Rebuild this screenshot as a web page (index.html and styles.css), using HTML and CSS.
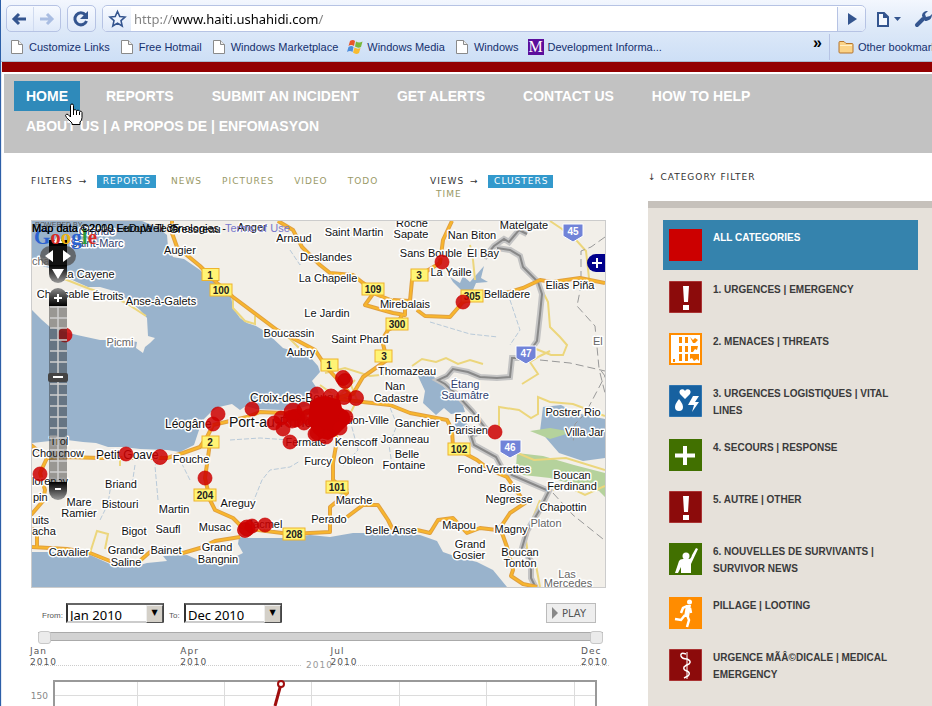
FILE: index.html
```html
<!DOCTYPE html>
<html lang="en">
<head>
<meta charset="utf-8">
<title>Ushahidi Haiti</title>
<link rel="stylesheet" href="styles.css">
</head>
<body>
<header class="browser">
  <div class="toolbar">
    <div class="history">
      <button type="button" aria-label="Back"><svg width="26" height="24" viewBox="0 0 26 24"><path d="M19 12H8M12 7l-5 5 5 5" fill="none" stroke="#34558f" stroke-width="3"/></svg></button>
      <button type="button" aria-label="Forward"><svg width="26" height="24" viewBox="0 0 26 24"><path d="M6 12h11M13 7l5 5-5 5" fill="none" stroke="#a9bde2" stroke-width="3"/></svg></button>
    </div>
    <button type="button" class="reload" aria-label="Reload"><svg width="26" height="24" viewBox="0 0 26 24"><path d="M17.500 8a6 6 0 1 0 1 6" fill="none" stroke="#34558f" stroke-width="3"/><path d="M20 4v8h-8z" fill="#34558f"/></svg></button>
    <form class="address">
      <button type="button" aria-label="Bookmark this page"><svg width="28" height="24" viewBox="0 0 28 24"><path d="M14.500 4.500l2.300 5 5.200.5-4 3.600 1.200 5.400-4.700-2.900L9.800 19l1.200-5.400-4-3.600 5.200-.5z" fill="#eef4ff" stroke="#34558f" stroke-width="1.600"/></svg></button>
      <input type="text" aria-label="Address" value="http://www.haiti.ushahidi.com/">
      <button type="submit" class="go" aria-label="Go"><svg width="28" height="24" viewBox="0 0 28 24"><path d="M10 6l9 6-9 6z" fill="#34558f"/></svg></button>
    </form>
    <button type="button" class="plain" aria-label="Page menu"><svg width="26" height="24" viewBox="0 0 26 24"><path d="M2 6h6l4 4v9H2zM8 6v4h4" fill="#f4f8ff" stroke="#34558f" stroke-width="2"/><path d="M18 10h7l-3.500 4z" fill="#34558f"/></svg></button>
    <button type="button" class="plain" aria-label="Settings"><svg width="18" height="24" viewBox="0 0 18 24"><path d="M3 18l6-6" stroke="#34558f" stroke-width="4" stroke-linecap="round"/><path d="M8 9c0-3 2-5 6-5l-3 3 1 3 4-1 2-2c0 5-3 7-7 7z" fill="#34558f"/></svg></button>
  </div>
  <nav class="bookmarks" aria-label="Bookmarks">
    <a href="#"><svg class="fav" viewBox="0 0 16 16"><use href="#doc"/></svg>Customize Links</a>
    <a href="#"><svg class="fav" viewBox="0 0 16 16"><use href="#doc"/></svg>Free Hotmail</a>
    <a href="#"><svg class="fav" viewBox="0 0 16 16"><use href="#doc"/></svg>Windows Marketplace</a>
    <a href="#"><svg class="fav" viewBox="0 0 16 16"><path d="M3 2q3-2 5 0L7 7Q4 5 1.500 7z" fill="#e8562a"/><path d="M9 2.500q3 2 6.500 0L14 8q-3 1.500-6-.5z" fill="#7ab83c"/><path d="M1.500 8q3-2 5 0L5.500 13Q3 11 0 13z" fill="#4d8ddb"/><path d="M7.500 8.500q3 2 6 .5L12 14q-3 2-6-.5z" fill="#f8bc30"/></svg>Windows Media</a>
    <a href="#"><svg class="fav" viewBox="0 0 16 16"><use href="#doc"/></svg>Windows</a>
    <a href="#"><span class="m-logo" aria-hidden="true">M</span>Development Informa...</a>
    <button type="button" class="more" aria-label="More bookmarks">»</button>
    <a href="#" class="other"><svg class="fav" viewBox="0 0 16 16"><path d="M1 3.500q0-1 1-1h4l2 2h6q1 0 1 1V13q0 1-1 1H2q-1 0-1-1z" fill="#fbd387" stroke="#b4752e"/><path d="M2 6.500h12" stroke="#fff0c8"/></svg>Other bookmarks</a>
  </nav>
  <svg class="defs" aria-hidden="true"><defs>
    <g id="doc"><path d="M2.500 1.500h7l4 4v9h-11z" fill="#fff" stroke="#8a8a8a"/><path d="M9.500 1.500v4h4" fill="#eee" stroke="#8a8a8a"/></g>
    <g id="bang"><path d="M.5.500h32v31H.5z" fill="#8c0b0b" stroke="#a33"/><path d="M14 5h6l-1 16h-4zM14 24h6v5h-6z" fill="#fff"/></g>
  </defs></svg>
</header>

<div class="site">
  <div class="redbar"></div>
  <nav class="mainnav">
    <a href="#" class="active">HOME</a>
    <a href="#">REPORTS</a>
    <a href="#">SUBMIT AN INCIDENT</a>
    <a href="#">GET ALERTS</a>
    <a href="#">CONTACT US</a>
    <a href="#">HOW TO HELP</a>
    <a href="#">ABOUT US | A PROPOS DE | ENFOMASYON</a>
    <svg class="cursor" width="20" height="24" viewBox="0 0 20 24" aria-hidden="true"><path d="M6.500 14V2.500q0-1.500 1.500-1.500t1.500 1.500V7q2-1 3 .5q2-1 3 .7q2-.6 2.500 1.300v5q0 3-2 4.500v2.500h-8V20L2.500 14.500q-2-2.500 0-3.300q1.500-.4 3 1.800z" fill="#fff" stroke="#000"/><path d="M9.500 7v5M12.500 8v4M15.500 9v3" stroke="#000"/></svg>
  </nav>

  <div class="content">
    <main>
      <div class="filters">
        <div class="group"><span>FILTERS</span><span class="arrow">→</span><a href="#" class="on">REPORTS</a><a href="#">NEWS</a><a href="#">PICTURES</a><a href="#">VIDEO</a><a href="#">TODO</a></div>
        <div class="group views"><span>VIEWS</span><span class="arrow">→</span><a href="#" class="on">CLUSTERS</a><a href="#">TIME</a></div>
      </div>

      <svg class="map" viewBox="32 221 573 366" role="img" aria-label="Map of incident reports around Port-au-Prince">
        <rect x="32" y="221" width="573" height="366" fill="#f2efe9"/>
        <g fill="#99b3cc">
          <path d="M32 221H142L157 227 167 235 168 247 173 257 184 259 200 270 207 277 230 290 233 308 240 318 247 323 256 326 266 332 283 348 296 352 310 357 318 366 320 372 312 381 318 390 320 402 304 407 283 410 256 409 246 406 240 410 232 404 219 407 211 412 202 421 198 433 194 445 180 452 167 450 140 449 123 447 108 447 96 443 83 442 67 440 50 441 32 443z"/>
          <path d="M32 552L67 552 90 555 110 564 133 567 147 563 167 561 163 556 187 555 205 563 233 558 243 553 238 544 239 537 247 538 283 538 310 535 330 537 353 533 390 533 420 535 437 541 443 552 457 557 477 562 493 570 507 587H32z"/>
          <path d="M418 376l14-2 6 8 14 12 10 8 3 10-14 2-7-6-8 7-13-12 2-12z"/>
          <path d="M458 415l20 20-16 0-8-8z"/>
          <path d="M543 407l18-2 15 8 29 6v39l-22 3-24-8-19-22z"/>
          <path d="M450 277l10 6 3-7 7 6 14-16-3 12 7 4-12 1-3 7h-12l-8-8z"/>
        </g>
        <path d="M32 264L50 268 70 279 88 287 100 287 114 291 127 299 140 310 147 318 148 336 155 338 150 343 145 347 143 353 136 348 137 342 127 340 100 340 77 335 62 331 50 327 42 320 32 310z" fill="#f2efe9"/>
        <g fill="#b5d29c"><path d="M530 431l20-3 23 4-23 7z"/><path d="M517 453l26 3 31 9 31 8v24l-6-6-49-13-27-3-7-8z"/><path d="M337 485l12 4-7 6-8-4z"/></g>
        <path d="M230 440l30-2 45 3M100 520l8-16 3-20M250 510l12-30 8-10 20-3 10-6M158 500l-3-34 8-13M135 465l-3 20M190 480l-10-20M385 395l12 30-8 20 3 20M350 420l8 30-15 16M510 300l10 30-10 15M430 322l40 12 28 3M290 250l10 15 8-14" class="stream"/>
        <g class="minor">
          <path d="M62 278l15 6 13 5 16 5 20 9 20 13M233 297l0 11 12 13 10 3v-8M277 330l12 8 10 10M412 366l10-7 14 3 10-4 12 6 12-4 13 4M550 221l12 8 15 12 9 10 3 27M538 282l10 20 2 25 10 10 7 8-4 10-12 0-15-6M550 351l-10 5-10 6 8 12-16 10M499 427v-20l20 3 12 8 7-4v-17l12 5 23 2 32 12M500 440l10 10 24 10 32-2 39 12M553 490l12-5 20 10 20-9M540 500l-10 25-4 15 2 15 8 10 4 22M90 553l7-22 11 3-3 15M120 466l0-6M470 245l3 15 2 20M325 373l20-5 25 8 20-2M320 385l14 10 4 20M345 370l12 30-10 20M355 380l-25 25"/>
        </g>
        <g class="dash"><path d="M605 237l-14 10-10 4v35l-4 20 18 20 4 42 6 8-20 38-10 10-2 20M540 360l30 3 35 8M553 493l20 22 30 24M600 373l5 20"/></g>
        <path d="M484 258l10-12 10-7 5 3 10-12 8 4M497 248l13 2 10 6 3 11 15 15 4 12-2 20-3 27-12 17-13 0-2 19-13 1-17-1-12-5-15-3-6 7-9 4 7 4 12 11 15 16 14 18-15 7 3 9 22 12 6 11 10 7 37 16-10 20-12 20-5 17 9 13v17l5 10" class="border"/>
        <path d="M484 258l10-12 10-7 5 3 10-12 8 4M497 248l13 2 10 6 3 11 15 15 4 12-2 20-3 27-12 17-13 0-2 19-13 1-17-1-12-5-15-3-6 7-9 4 7 4 12 11 15 16 14 18-15 7 3 9 22 12 6 11 10 7 37 16-10 20-12 20-5 17 9 13v17l5 10" class="border-core"/>
        <defs><g id="roads">
          <path d="M172 221v12l5 14 23 19 17 17 16 14 44 33 23 12 15 8 12 18 13 14 10 12-24 8"/>
          <path d="M278 221l15 9 9 17 18 18 10 8 23 2 10 8 12 8-10 14 28 8 12 2v-10l-12-4-20-8M393 300l17 1 2-21 28-17 3-23 9-19"/>
          <path d="M417 310l8 6 25 1 13-15 20-6 27-4 13-4 17-8 12 2 28-4 25 5"/>
          <path d="M402 315l-5 10-9 5-6 10 5 20-24 17-10 17-20 5"/>
          <path d="M325 412l-42 1-23-1-13 5-34 8-6 12-7 10-17 6-16 5h-67l-33-1-20 1-16-13"/>
          <path d="M47 458l-7 15 5 17-2 11-12 14M32 528l5 8v12M32 547l35 2 23 4 20 8 25 4 15-13 33 1 17-5 15-7 25-4"/>
          <path d="M210 437l-1 13-4 28 5 22 5 10 18 8 10 10M243 528l47 6 40-2v-25l17-14-14-13v-17l4-23-4-12"/>
          <path d="M347 517l16-12h15l10 15 4 8 25 2 13 3 8-13 15-2 14 15 13-5 17 2 5-5 8-12 15-10-18-26-17-7-13-10-24-13-1-17-5-10-37-7-20-8-27-3-33-4"/>
          <path d="M502 533l5 14 6 23-2 6 12 8 14 3"/>
        </g></defs>
        <use href="#roads" class="road-edge"/>
        <use href="#roads" class="road"/>
        <g class="labels">
          <text x="97" y="235" class="lake">Grande</text><text x="97" y="247" class="lake">Saint-Marc</text>
          <text x="32" y="265" class="soft start">chal</text>
          <text x="195" y="233">Gressreau</text><text x="252" y="231">Anger</text><text x="180" y="254">Augier</text>
          <text x="294" y="242">Arnaud</text><text x="88" y="278">La Cayene</text><text x="63" y="298">Chansable</text><text x="108" y="300">Étroits</text>
          <text x="161" y="305">Anse-à-Galets</text><text x="120" y="346" class="soft">Picmi</text>
          <text x="289" y="337">Boucassin</text><text x="301" y="356">Aubry</text>
          <text x="354" y="236">Saint Martin</text><text x="412" y="227">Roche</text><text x="411" y="238">Sapate</text><text x="472" y="239">Nan Biton</text><text x="524" y="229">Matelgate</text>
          <text x="326" y="261">Deslandes</text><text x="328" y="282">La Chapelle</text><text x="431" y="257">Sans Bouble</text><text x="483" y="257">El Bay</text><text x="451" y="276">La Yaille</text>
          <text x="507" y="298">Belladere</text><text x="570" y="289">Elias Piña</text><text x="405" y="308">Mirebalais</text><text x="327" y="317">Le Jardin</text>
          <text x="360" y="343">Saint Phard</text><text x="407" y="375">Thomazeau</text><text x="593" y="345" class="soft start">El</text>
          <text x="395" y="390">Nan</text><text x="396" y="402">Cadastre</text><text x="465" y="388" class="lake">Étang</text><text x="465" y="399" class="lake">Saumâtre</text>
          <text x="250" y="402" class="mid start">Croix-des-Bouq</text><text x="165" y="428" class="mid start">Léogâne</text><text x="229" y="427" class="big start">Port-au-Prince</text>
          <text x="389" y="424" class="end">Petion-Ville</text><text x="417" y="427">Ganchier</text><text x="467" y="422">Fond</text><text x="468" y="434">Parisien</text>
          <text x="573" y="416">Postrer Rio</text><text x="604" y="436" class="end">Villa Jar</text><text x="405" y="443">Joanneau</text><text x="407" y="458">Belle</text><text x="404" y="469">Fontaine</text>
          <text x="306" y="446">Fermate</text><text x="356" y="446">Kenscoff</text><text x="318" y="465">Furcy</text><text x="356" y="464">Obleon</text>
          <text x="494" y="473">Fond-Verrettes</text><text x="572" y="479">Boucan</text><text x="572" y="490">Ferdinand</text><text x="510" y="492">Bois</text><text x="509" y="503">Negresse</text><text x="563" y="511">Chapottin</text><text x="546" y="527" class="soft">Platon</text>
          <text x="354" y="504">Marche</text><text x="329" y="523">Perado</text><text x="391" y="534">Belle Anse</text><text x="459" y="529">Mapou</text><text x="511" y="533">Magny</text><text x="470" y="548">Grand</text><text x="469" y="559">Gosier</text><text x="520" y="556">Boucan</text><text x="520" y="567">Tonton</text><text x="567" y="578" class="soft">Las</text><text x="568" y="587" class="soft">Mercedes</text>
          <text x="59" y="445">Trol</text><text x="58" y="457">Chouchow</text><text x="96" y="459" class="mid start">Petit Goave</text><text x="191" y="463">Fouche</text><text x="32" y="485" class="start">lorenoy</text><text x="33" y="501" class="start">pin</text><text x="32" y="524" class="start">uits</text><text x="32" y="535" class="start">acha</text>
          <text x="121" y="488">Briand</text><text x="120" y="508">Bistouri</text><text x="79" y="506">Mare</text><text x="79" y="517">Ramier</text><text x="174" y="513">Martin</text><text x="168" y="533">Saufl</text><text x="134" y="535">Bigot</text><text x="215" y="531">Musac</text><text x="238" y="507">Areguy</text><text x="265" y="528">Jacmel</text>
          <text x="69" y="556">Cavalier</text><text x="126" y="554">Grande</text><text x="126" y="566">Saline</text><text x="166" y="554">Bainet</text><text x="217" y="551">Grand</text><text x="218" y="563">Bangnin</text>
        </g>
        <g class="shield">
          <rect x="202" y="268.500" width="17" height="12"/><text x="210" y="279">1</text>
          <rect x="210" y="284" width="22" height="12"/><text x="221" y="294">100</text>
          <rect x="362" y="283" width="22" height="12"/><text x="373" y="293">109</text>
          <rect x="411" y="269" width="17" height="12"/><text x="419" y="279">3</text>
          <rect x="461" y="290" width="22" height="12"/><text x="472" y="300">305</text>
          <rect x="386" y="318" width="22" height="12"/><text x="397" y="328">300</text>
          <rect x="375" y="350" width="17" height="12"/><text x="384" y="360">3</text>
          <rect x="321" y="359" width="17" height="12"/><text x="329" y="369">1</text>
          <rect x="202" y="436" width="17" height="12"/><text x="210" y="446">2</text>
          <rect x="194" y="489" width="22" height="12"/><text x="205" y="499">204</text>
          <rect x="283" y="528" width="22" height="12"/><text x="294" y="538">208</text>
          <rect x="326" y="481" width="22" height="12"/><text x="337" y="491">101</text>
          <rect x="448" y="443" width="22" height="12"/><text x="459" y="453">102</text>
        </g>
        <g class="intl">
          <path d="M563 224h20v12l-10 6-10-6z"/><text x="573" y="235">45</text>
          <path d="M516 346h20v12l-10 6-10-6z"/><text x="526" y="357">47</text>
          <path d="M500 440h21v12l-11 6-10-6z"/><text x="510" y="451">46</text>
        </g>
        <g class="dots">
          <circle cx="442" cy="262" r="7"/><circle cx="463" cy="302" r="7"/><circle cx="495" cy="432" r="7"/><circle cx="65" cy="335" r="7"/>
          <circle cx="252" cy="409" r="7"/><circle cx="218" cy="414" r="7"/><circle cx="213" cy="424" r="7"/><circle cx="126" cy="454" r="7"/><circle cx="160" cy="457" r="7.500"/><circle cx="40" cy="474" r="7"/><circle cx="205" cy="478" r="7"/>
          <circle cx="245" cy="530" r="7.500"/><circle cx="247" cy="528" r="8"/><circle cx="252" cy="526" r="7"/><circle cx="265" cy="525" r="7"/>
          <circle cx="343" cy="378" r="7.500"/><circle cx="345" cy="381" r="7.500"/><circle cx="356" cy="398" r="7.500"/><circle cx="344" cy="397" r="7.500"/><circle cx="331" cy="397" r="8"/><circle cx="317" cy="394" r="7"/>
          <circle cx="290" cy="442" r="7"/><circle cx="274" cy="423" r="7"/><circle cx="283" cy="429" r="7"/><circle cx="281" cy="418" r="7"/><circle cx="293" cy="412" r="9"/><circle cx="296" cy="418" r="9"/><circle cx="292" cy="419" r="9"/><circle cx="304" cy="409" r="7"/><circle cx="304" cy="423" r="7"/><circle cx="309" cy="417" r="8"/><circle cx="315" cy="434" r="7"/>
        </g>
        <path d="M310 402q6-6 16-6l14 4 2 8 6 4q4 6 1 11l-7 7-6 6-8 4-8-2-6-5-6-10z" fill="#c00"/>
        <g class="dots"><circle cx="346" cy="417" r="7"/><circle cx="340" cy="428" r="7"/><circle cx="326" cy="437" r="7"/><circle cx="317" cy="433" r="7"/></g>
        <path d="M605 254h-9a9 9 0 0 0 0 18h9z" fill="#00008b"/><path d="M592 263h10M597 258v10" stroke="#fff" stroke-width="2"/>
        <defs><linearGradient id="cap" x2="0" y2="1"><stop offset="0" stop-color="#888"/><stop offset="1"/></linearGradient><linearGradient id="cap2" x2="0" y2="1"><stop offset="0"/><stop offset="1" stop-color="#999"/></linearGradient></defs>
        <rect x="49" y="240" width="18" height="33" fill="#000"/><rect x="40" y="246" width="36" height="20" rx="10" fill="#555" opacity=".8"/><rect x="49" y="246" width="18" height="20" fill="#111"/><path d="M49 265h18v9a9 9 0 0 1-18 0z" fill="url(#cap2)"/>
        <path d="M45 256l8-6v12zM71 256l-8-6v12zM58 279l-6-10h12zM58 235l5 8h-10z" fill="#fff"/>
        <text x="35" y="227" class="powered">POWERED BY</text>
        <text x="34" y="244" class="google"><tspan fill="#2b62d0">G</tspan><tspan fill="#d62b24">o</tspan><tspan fill="#eeb211">o</tspan><tspan fill="#2b62d0">g</tspan><tspan fill="#2b9b3c">l</tspan><tspan fill="#d62b24">e</tspan></text>
        <text x="32" y="232" class="credit">Map data ©2010 Europa Technologies -</text>
        <text x="32" y="232" class="credit">Map data ©2009 LeDuWell 35</text>
        <text x="225" y="232" class="credit terms">Terms of Use</text>
        <path d="M49 306v-9a9 9 0 0 1 18 0v9z" fill="url(#cap)"/><path d="M54 298h8M58 294v8" stroke="#fff" stroke-width="2"/>
        <rect x="49" y="306" width="18" height="177" fill="#222" opacity=".43"/>
        <path d="M58 306v176M50 307h17M50 318h17M50 328h17M50 340h17M50 351h17M50 362h17M50 384h17M50 395h17M50 406h17M50 417h17M50 428h17M50 438h17M50 450h17M50 461h17M50 472h17" stroke="#d0d0d0" stroke-width="1.500" fill="none"/>
        <path d="M49 482h18v9a9 9 0 0 1-18 0z" fill="url(#cap2)"/><path d="M55 489h6" stroke="#fff" stroke-width="2"/>
        <rect x="48" y="373" width="20" height="9" rx="2" fill="#444"/><path d="M53 377h10" stroke="#fff" stroke-width="2"/>
      </svg>

      <form class="range">
        <label for="from">From:</label>
        <span class="picker"><select id="from"><option>Jan 2010</option></select></span>
        <label for="to">To:</label>
        <span class="picker"><select id="to"><option>Dec 2010</option></select></span>
        <button type="button" class="play"><svg width="6" height="12" viewBox="0 0 6 12"><path d="M0 0l6 6-6 6z" fill="#888"/></svg>PLAY</button>
      </form>
      <div class="slider">
        <input type="range" aria-label="Start month" min="0" max="11" value="0">
        <input type="range" aria-label="End month" min="0" max="11" value="11">
      </div>
      <div class="scale">
        <div class="year"><span>2010</span></div>
        <div class="months"><span>Jan<br>2010</span><span>Apr<br>2010</span><span>Jul<br>2010</span><span>Dec<br>2010</span></div>
      </div>
      <svg class="chart" viewBox="31 680 575 26" role="img" aria-label="Reports per month">
        <path d="M137.500 682v24M224.500 682v24M311.500 682v24M399.500 682v24M486.500 682v24M574.500 682v24M55 695.500h541" stroke="#dcdcdc" fill="none"/>
        <path d="M54 706V681h542v25" stroke="#999" stroke-width="2" fill="none"/>
        <path d="M281 684l-6 22" stroke="#a00d0d" stroke-width="3" fill="none"/>
        <circle cx="281" cy="684" r="3" fill="#fff" stroke="#a00d0d" stroke-width="2"/>
        <text x="48" y="699" class="tick">150</text>
      </svg>
    </main>

    <aside>
      <h2>↓ CATEGORY FILTER</h2>
      <ul class="categories">
        <li><a href="#" class="on"><svg viewBox="0 0 33 32"><path d="M0 0h33v32H0z" fill="#c00"/></svg><span>ALL CATEGORIES</span></a></li>
        <li><a href="#"><svg viewBox="0 0 33 32"><use href="#bang"/></svg><span>1. URGENCES | EMERGENCY</span></a></li>
        <li><a href="#"><svg viewBox="0 0 33 32"><path d="M1 1h31v30H1z" fill="#fff" stroke="#ff8c00" stroke-width="2"/><path d="M10 4h3v6h-3zM16 4h3v6h-3zM21 4l3 3 2-2 3 2-3 3h-2zM10 13h3v6h-3zM16 13h3v6h-3zM22 13h7l-1 4-2-1-2 3h-2zM10 21h3v7h-3zM16 21h3v7h-3zM21 21h9v7l-2-2-3 2-2-3-2 1zM4 26h2v3H4z" fill="#ff8c00"/></svg><span>2. MENACES | THREATS</span></a></li>
        <li><a href="#"><svg viewBox="0 0 33 32"><path d="M.5.500h32v31H.5z" fill="#1761a0" stroke="#2f75b0"/><path d="M16 14l-5-5q-1.500-3 1-4.500 3-1 4 1.500 1-2.500 4-1.500 2.500 1.500 1 4.500zM10 14q4 5 4 8a4 4 0 0 1-8 0q0-3 4-8zM24 11h6l-4 6h4l-7 10 2-7h-6z" fill="#fff"/></svg><span>3. URGENCES LOGISTIQUES | VITAL LINES</span></a></li>
        <li><a href="#"><svg viewBox="0 0 33 32"><path d="M0 0h33v32H0z" fill="#417000"/><path d="M6 16.500h20M16 7v19" stroke="#fff" stroke-width="4"/></svg><span>4. SECOURS | RESPONSE</span></a></li>
        <li><a href="#"><svg viewBox="0 0 33 32"><use href="#bang"/></svg><span>5. AUTRE | OTHER</span></a></li>
        <li><a href="#"><svg viewBox="0 0 33 32"><path d="M0 0h33v32H0z" fill="#417000"/><circle cx="17" cy="13" r="3.500" fill="#fff"/><path d="M27 5l2 1-7 15v9H12v-6l-3 6H6l4-12q1-2 4-2h6q2 0 3-4z" fill="#fff"/></svg><span>6. NOUVELLES DE SURVIVANTS | SURVIVOR NEWS</span></a></li>
        <li><a href="#"><svg viewBox="0 0 33 32"><path d="M0 0h33v32H0z" fill="#ff8c00"/><circle cx="20.500" cy="5" r="2.500" fill="#fff"/><path d="M18 9l-4 2-2 5M18 18l2 5-2 7M16 18l-4 5-6-1M21 11l1 5" fill="none" stroke="#fff" stroke-width="2.500"/><path d="M17 8h5l-2 12h-5z" fill="#fff"/></svg><span>PILLAGE | LOOTING</span></a></li>
        <li><a href="#"><svg viewBox="0 0 33 32"><path d="M.5.500h32v31H.5z" fill="#8c0b0b" stroke="#a33"/><path d="M18 3v27" stroke="#fff"/><path d="M17 5q-6-2-5 2 1 3 6 3 5 2 2 5-3 1-5 3-1 3 3 4 4 2 1 5l-4 2" fill="none" stroke="#fff" stroke-width="1.500"/></svg><span>URGENCE MÃÂ©DICALE | MEDICAL EMERGENCY</span></a></li>
      </ul>
    </aside>
  </div>
</div>
</body>
</html>
```
FILE: styles.css
```css
* { box-sizing: border-box; }
html { height: 100%; overflow: hidden; }
body {
  display: flex;
  flex-direction: column;
  margin: 0;
  height: 100%;
  overflow: hidden;
  background: #fff;
  border-left: 1px solid #2c5fa8;
  font-family: "Liberation Sans", Arial, sans-serif;
}
a { text-decoration: none; color: inherit; }
button { margin: 0; padding: 0; border: 0; background: none; color: inherit; font: inherit; }
svg { display: block; }
.defs { position: absolute; width: 0; height: 0; }

/* Browser toolbar */
.browser {
  flex: none;
  height: 62px;
  overflow: hidden;
  padding: 5px 0 0 5px;
  background: linear-gradient(#f3f7fe, #dce8f8 50%, #cddff6);
  border-bottom: 1px solid #a9b9cc;
}
.toolbar { display: flex; align-items: center; height: 27px; }
.history, .reload, .address {
  display: flex;
  align-items: center;
  height: 27px;
  border: 1px solid #b6c3e4;
  border-radius: 5px;
  background: linear-gradient(#f7faff, #dfe9f9);
}
.history { width: 55px; }
.history button + button { border-left: 1px solid #d0dbf0; }
.reload { width: 29px; margin: 0 6px; }
.address { flex: 1; overflow: hidden; background: #fff; }
.address input {
  flex: 1;
  min-width: 0;
  height: 25px;
  padding: 0 3px;
  border: 0;
  font: 13px "Noto Sans", Tahoma, sans-serif;
  background: linear-gradient(90deg, #808080 41px, #000 41px, #000 188px, #808080 188px);
  background-clip: text;
  color: transparent;
}
.address button { flex: none; width: 28px; background: linear-gradient(#f7faff, #dfe9f9); }
.address .go { border-left: 1px solid #b6c3e4; }
.plain { flex: none; margin-left: 10px; }
.plain + .plain { margin-left: 12px; }
.bookmarks {
  display: flex;
  align-items: center;
  height: 29px;
  padding-left: 3px;
  font-size: 11px;
  color: #15306e;
  white-space: nowrap;
}
.bookmarks a { display: flex; align-items: center; gap: 4px; margin-right: 9px; }
.fav { flex: none; width: 16px; height: 16px; }
.m-logo { width: 16px; height: 16px; background: #5c0f9c; color: #fff; font: 16px/16px "Liberation Serif", serif; text-align: center; }
.more { margin-left: auto; padding-bottom: 8px; font-weight: bold; font-size: 16px; color: #000; }
.bookmarks .other { width: 103px; height: 26px; margin: 0 0 0 7px; padding-left: 8px; border-left: 1px solid #b6c3e4; overflow: hidden; flex: none; }

/* Site header */
.site { flex: 1; min-height: 0; overflow: hidden; border-left: 1px solid #e3eaf5; }
.redbar { height: 10px; background: #930000; }
.mainnav {
  position: relative;
  display: flex;
  flex-wrap: wrap;
  align-content: flex-start;
  gap: 0 14px;
  margin: 2px 0 0 2px;
  padding: 7px 120px 12px 10px;
  background: #c2c2c2;
  color: #fff;
  font-size: 14px;
  font-weight: bold;
  line-height: 30px;
}
.mainnav a { padding: 0 12px; }
.mainnav .active { background: #2f8aba; }
.cursor { position: absolute; left: 60px; top: 29px; }

/* Two columns */
.content {
  display: grid;
  grid-template-columns: minmax(0, 575fr) minmax(0, 284fr);
  gap: 42px;
  padding-left: 29px;
}
.filters {
  display: grid;
  grid-template-columns: 399fr 176fr;
  margin: 22px 0 19px;
  font: 9px/13px "DejaVu Sans", Verdana, sans-serif;
  letter-spacing: 1px;
  color: #333;
}
.group { display: flex; flex-wrap: wrap; align-content: flex-start; column-gap: 9px; }
.views { padding-right: 40px; }
.group a { padding: 0 5px 0 6px; color: #999966; }
.group .on { background: #3399cc; color: #fff; }
.arrow { width: 9px; margin-left: -3px; }

.map { width: 100%; height: auto; border: 1px solid #ccc; }
.stream { fill: none; stroke: #b9cad9; stroke-width: 1; stroke-dasharray: 5 2; }
.minor { fill: none; stroke: #ecd67c; stroke-width: 2; }
.dash { fill: none; stroke: #999; stroke-width: 1; stroke-dasharray: 8 4; }
.border { fill: none; stroke: #c4c4c4; stroke-width: 6; }
.border-core { fill: none; stroke: #888; stroke-width: 2; }
.road-edge { fill: none; stroke: #e0a040; stroke-width: 4; stroke-linejoin: round; }
.road { fill: none; stroke: #f8b62d; stroke-width: 2; stroke-linejoin: round; }
.labels { font-size: 11px; text-anchor: middle; fill: #111; stroke: #fff; stroke-width: 3px; stroke-linejoin: round; paint-order: stroke; }
.labels .mid { font-size: 12px; }
.labels .big { font-size: 14px; }
.labels .soft { fill: #666; }
.labels .lake { fill: #2f3f70; }
.labels .start { text-anchor: start; }
.labels .end { text-anchor: end; }
.shield rect { fill: #fff475; stroke: #eeb42c; }
.shield text, .intl text { font-size: 10px; font-weight: bold; text-anchor: middle; fill: #222; }
.intl path { fill: #7183d8; stroke: #fff; }
.intl text { fill: #fff; }
.dots { fill: #c00; fill-opacity: .85; stroke: #c00; stroke-opacity: .7; }
.powered { font-size: 7px; fill: #555; }
.google { font: bold 21px "Liberation Serif", serif; }
.credit { font-size: 11px; fill: #000; }
.terms { fill: #7777cc; }

/* Time controls */
.range { display: flex; align-items: center; height: 20px; margin: 15px 10px 8px 11px; }
.range label { padding-top: 6px; font: 8px/12px "Liberation Sans", sans-serif; color: #555; width: 24px; }
.picker + label { width: 15px; margin-left: 5px; }
.picker { position: relative; display: block; width: 98px; height: 20px; }
.picker::after {
  content: "▼";
  position: absolute;
  right: 1px;
  top: 2px;
  width: 15px;
  height: 16px;
  border: 1px solid;
  border-color: #eee #555 #555 #eee;
  background: #d4d0c8;
  color: #000;
  font: 8px/14px "DejaVu Sans", sans-serif;
  text-align: center;
  pointer-events: none;
}
.picker select {
  appearance: none;
  width: 98px;
  height: 20px;
  padding: 2px 2px 0;
  border: 2px solid;
  border-color: #666 #444 #ccc #333;
  border-radius: 0;
  background: #fff;
  color: #000;
  font: 13px/16px "Noto Sans", Tahoma, sans-serif;
}
.play {
  display: flex;
  align-items: center;
  gap: 4px;
  width: 50px;
  height: 20px;
  margin-left: auto;
  padding-left: 5px;
  border: 1px solid #bbb;
  background: #eee;
  color: #555;
  font: 10px "DejaVu Sans", Verdana, sans-serif;
}
.slider { display: grid; height: 13px; margin: 0 3px 0 7px; background: linear-gradient(#aaa, #aaa 1px, #d2d2d2 1px, #d2d2d2 8px, #aaa 8px) 0 1px / 100% 9px no-repeat; }
.slider input { grid-area: 1 / 1; appearance: none; width: 100%; height: 13px; margin: 0; background: none; pointer-events: none; }
.slider input::-webkit-slider-thumb { appearance: none; width: 13px; height: 13px; border: 1px solid #c8c8c8; border-radius: 3px; background: #ebebeb; pointer-events: auto; }
.scale {
  display: grid;
  margin: 2px -3px 0 -1px;
  font: 9px/11px "DejaVu Sans", Verdana, sans-serif;
  letter-spacing: 1px;
  color: #555;
}
.scale > * { grid-area: 1 / 1; }
.months { display: grid; grid-template-columns: 3fr 3fr 5fr 28px; }
.year { display: flex; align-items: center; align-self: end; gap: 5px; margin-bottom: -3px; color: #999; }
.year::before, .year::after { content: ""; flex: 1; border-top: 1px dotted #ccc; }
.chart { width: 100%; height: auto; margin-top: 12px; }
.tick { font: 9px "DejaVu Sans", Verdana, sans-serif; text-anchor: end; fill: #888; }

/* Category filter */
aside { display: flex; flex-direction: column; }
aside h2 {
  margin: 18px 0 17px;
  font: 9px/13px "DejaVu Sans", Verdana, sans-serif;
  letter-spacing: 1px;
  color: #333;
}
.categories {
  flex: 1;
  list-style: none;
  margin: 0;
  padding: 12px 14px 0 15px;
  border-top: 7px solid #c6c1bb;
  background: #e6e1da;
  font-size: 10px;
  font-weight: bold;
  line-height: 17px;
  color: #3a3a3a;
}
.categories li { margin-bottom: 2px; }
.categories a { display: flex; align-items: flex-start; gap: 11px; padding: 9px 6px; }
.categories svg { flex: none; width: 33px; height: 32px; }
.categories .on { background: #3583ad; color: #fff; }
```
